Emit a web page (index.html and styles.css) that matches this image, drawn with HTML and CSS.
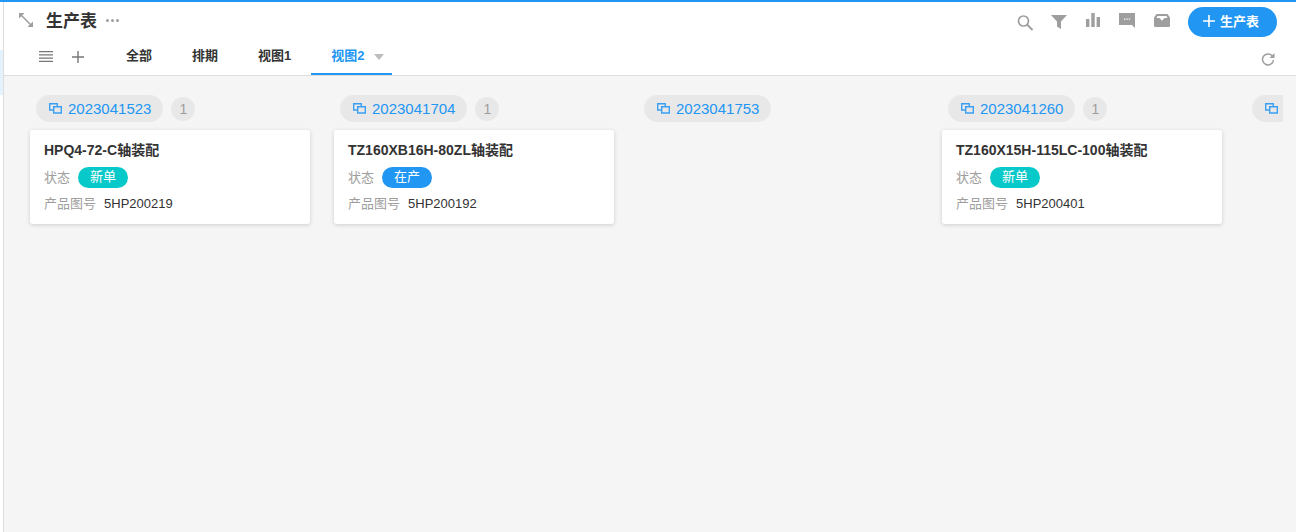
FILE: index.html
```html
<!DOCTYPE html>
<html lang="zh-CN">
<head>
    <meta charset="UTF-8">
    <title>生产表</title>
    <link rel="stylesheet" href="styles.css">
</head>
<body>
    <!-- Left rail -->
    <div class="rail"><div class="rail-active"></div></div>

    <div class="page">
        <!-- Header -->
        <div class="header">
            <div class="title-row">
                <svg class="expand-icon" width="14" height="14" viewBox="0 0 14 14"><path d="M1.500 1.500l11 11" stroke="#9e9e9e" stroke-width="1.500"/><path d="M0 0h5.500L0 5.500zM14 14H8.500L14 8.500z" fill="#9e9e9e"/></svg>
                <span class="page-title">生产表</span>
                <span class="more-dots"><i></i><i></i><i></i></span>
                <div class="tools">
                    <svg width="16" height="16" viewBox="0 0 16 16"><circle cx="6.500" cy="8" r="5" fill="none" stroke="#9e9e9e" stroke-width="1.700"/><path d="M10 11.500l5.500 5.500" stroke="#9e9e9e" stroke-width="2"/></svg>
                    <svg width="16" height="16" viewBox="0 0 16 16"><path d="M0 2h16l-6 6.500V16l-4-2.500v-5z" fill="#9e9e9e"/></svg>
                    <svg width="16" height="16" viewBox="0 0 16 16"><path d="M1 6h3.400v8H1zM6.300 0h3.400v14H6.300zM11.600 4H15v10h-3.400z" fill="#9e9e9e"/></svg>
                    <svg width="16" height="16" viewBox="0 0 16 16"><path d="M0 0h16v15l-3-3H0z" fill="#9e9e9e"/><path d="M5 5.500h1.300v1.300H5zM7.400 5.500h1.300v1.300H7.400zM9.800 5.500h1.300v1.300H9.800z" fill="#fff"/></svg>
                    <svg class="inbox-icon" width="16" height="16" viewBox="0 0 16 16"><path d="M2.500 1h11L16 4.500V12.500q0 1.500-1.500 1.500h-13Q0 14 0 12.500V4.500z" fill="#9e9e9e"/><path d="M2.500 5H5.500L8 7.800 10.500 5h3L12.500 3h-9z" fill="#fff"/></svg>
                </div>
                <button class="add-btn"><svg class="add-plus" width="12" height="12" viewBox="0 0 12 12"><path d="M5.200 0h1.600v5.200H12v1.600H6.800V12H5.200V6.800H0V5.200h5.200z" fill="#fff"/></svg>生产表</button>
            </div>
            <div class="tab-row">
                <svg class="menu-icon" width="14" height="11" viewBox="0 0 14 11"><path d="M0 0h14v1.300H0zM0 3.200h14v1.300H0zM0 6.500h14v1.300H0zM0 9.700h14V11H0z" fill="#777"/></svg>
                <svg class="plus-icon" width="12" height="12" viewBox="0 0 12 12"><path d="M5.300 0h1.400v5.300H12v1.400H6.700V12H5.300V6.700H0V5.300h5.300z" fill="#777"/></svg>
                <div class="tabs">
                    <a class="tab">全部</a>
                    <a class="tab">排期</a>
                    <a class="tab">视图1</a>
                    <a class="tab tab-active">视图2<span class="caret"></span></a>
                </div>
                <svg class="refresh-icon" width="14" height="14" viewBox="0 0 14 14"><path d="M11.700 4.500A5.500 5.500 0 1 0 12.500 8" fill="none" stroke="#9e9e9e" stroke-width="1.500"/><path d="M13.500 1v5h-5z" fill="#9e9e9e"/></svg>
            </div>
        </div>

        <!-- Board -->
        <div class="board">
            <div class="column">
                <div class="column-head">
                    <span class="group-pill"><svg class="link-icon" viewBox="0 0 13 11"><use href="#link"/></svg>2023041523</span>
                    <span class="count">1</span>
                </div>
                <div class="card">
                    <div class="card-title">HPQ4-72-C轴装配</div>
                    <div class="card-row"><span class="label">状态</span><span class="tag tag-new">新单</span></div>
                    <div class="card-row"><span class="label">产品图号</span><span class="value">5HP200219</span></div>
                </div>
            </div>
            <div class="column">
                <div class="column-head">
                    <span class="group-pill"><svg class="link-icon" viewBox="0 0 13 11"><use href="#link"/></svg>2023041704</span>
                    <span class="count">1</span>
                </div>
                <div class="card">
                    <div class="card-title">TZ160XB16H-80ZL轴装配</div>
                    <div class="card-row"><span class="label">状态</span><span class="tag tag-doing">在产</span></div>
                    <div class="card-row"><span class="label">产品图号</span><span class="value">5HP200192</span></div>
                </div>
            </div>
            <div class="column">
                <div class="column-head">
                    <span class="group-pill"><svg class="link-icon" viewBox="0 0 13 11"><use href="#link"/></svg>2023041753</span>
                </div>
            </div>
            <div class="column">
                <div class="column-head">
                    <span class="group-pill"><svg class="link-icon" viewBox="0 0 13 11"><use href="#link"/></svg>2023041260</span>
                    <span class="count">1</span>
                </div>
                <div class="card">
                    <div class="card-title">TZ160X15H-115LC-100轴装配</div>
                    <div class="card-row"><span class="label">状态</span><span class="tag tag-new">新单</span></div>
                    <div class="card-row"><span class="label">产品图号</span><span class="value">5HP200401</span></div>
                </div>
            </div>
            <!-- Next column is cut off by the board edge, only its icon shows -->
            <div class="column">
                <div class="column-head">
                    <span class="group-pill group-pill-cut"><svg class="link-icon" viewBox="0 0 13 11"><use href="#link"/></svg></span>
                </div>
            </div>
        </div>
    </div>

    <!-- Shared icon -->
    <svg class="icon-defs" width="0" height="0">
        <symbol id="link" viewBox="0 0 13 11">
            <path d="M4.500 7H.7V.7h7.600v3M4.700 3.700h7.600V10H4.700z" fill="none" stroke="#3a9ff5" stroke-width="1.400"/>
        </symbol>
    </svg>
</body>
</html>
```
FILE: styles.css
```css
html, body {
    height: 100%;
}

body {
    margin: 0;
    display: flex;
    height: 532px;
    overflow: hidden;
    font-family: "Liberation Sans", "Noto Sans CJK SC", sans-serif;
    background-color: #fff;
    border-top: 2px solid #2196f3;
    box-sizing: border-box;
}

/* Left rail */
.rail {
    width: 3px;
    flex-shrink: 0;
    padding-top: 48px;
    border-right: 1px solid #ddd;
}

.rail-active {
    height: 45px;
    background-color: #e3f2fd;
}

.page {
    flex: 1;
    min-width: 0;
    display: flex;
    flex-direction: column;
}

/* Header */
.header {
    height: 74px;
    flex-shrink: 0;
    box-sizing: border-box;
    border-bottom: 1px solid #ddd;
}

.title-row {
    height: 40px;
    display: flex;
    align-items: center;
    padding: 0 19px 0 15px;
}

.expand-icon {
    margin-top: -4px;
}

.page-title {
    margin-left: 13px;
    margin-top: -5px;
    font-size: 17px;
    font-weight: bold;
    color: #333;
}

.more-dots {
    display: flex;
    gap: 2px;
    margin-left: 9px;
    margin-top: -4px;
}

.more-dots i {
    width: 3px;
    height: 3px;
    border-radius: 50%;
    background-color: #9e9e9e;
}

.tools {
    margin-left: auto;
    display: flex;
    align-items: center;
    gap: 18px;
    margin-top: -2px;
}

.tools svg {
    overflow: visible;
}

.inbox-icon {
    margin-left: 1px;
}

.add-btn {
    display: flex;
    align-items: center;
    margin-left: 18px;
    width: 89px;
    height: 30px;
    border: none;
    border-radius: 15px;
    background-color: #2196f3;
    color: #fff;
    font-family: inherit;
    font-size: 13px;
    font-weight: bold;
    padding: 0 0 3px 15px;
}

.add-plus {
    margin-right: 5px;
}

.tab-row {
    height: 33px;
    display: flex;
    align-items: center;
    padding-left: 35px;
    padding-right: 21px;
}

.menu-icon,
.plus-icon {
    margin-top: -4px;
}

.plus-icon {
    margin-left: 19px;
}

.tabs {
    display: flex;
    height: 100%;
    margin-left: 22px;
}

.tab {
    padding: 0 20px;
    font-size: 13px;
    font-weight: bold;
    line-height: 28px;
    color: #333;
    box-sizing: border-box;
}

.tab-active {
    padding-right: 8px;
    color: #2196f3;
    border-bottom: 2px solid #2196f3;
}

.caret {
    display: inline-block;
    margin-left: 9px;
    vertical-align: 0;
    border-left: 5px solid transparent;
    border-right: 5px solid transparent;
    border-top: 6px solid #bdbdbd;
}

.refresh-icon {
    margin-left: auto;
}

/* Board */
.board {
    flex: 1;
    display: flex;
    overflow: hidden;
    margin-right: 13px;
    padding-left: 26px;
    background-color: #f5f5f5;
    box-shadow: 13px 0 0 #f5f5f5;
}

.column {
    width: 280px;
    flex-shrink: 0;
    margin-right: 24px;
}

.column-head {
    display: flex;
    align-items: center;
    gap: 8px;
    height: 27px;
    margin-top: 19px;
    padding-left: 6px;
}

.group-pill {
    display: flex;
    align-items: center;
    height: 27px;
    padding: 0 12px 0 13px;
    border-radius: 14px;
    background-color: #e8e8e8;
    color: #2196f3;
    font-size: 15px;
}

.group-pill-cut {
    width: 100px;
}

.link-icon {
    width: 13px;
    height: 11px;
    margin-right: 6px;
}

.count {
    width: 24px;
    height: 24px;
    border-radius: 50%;
    background-color: #e8e8e8;
    color: #9e9e9e;
    font-size: 14px;
    line-height: 24px;
    text-align: center;
}

.card {
    height: 94px;
    margin-top: 8px;
    padding: 11px 14px 0;
    box-sizing: border-box;
    border-radius: 3px;
    background-color: #fff;
    box-shadow: 0 1px 4px rgba(0, 0, 0, 0.16);
}

.card-title {
    font-size: 14px;
    font-weight: bold;
    line-height: 18px;
    color: #333;
}

.card-row {
    display: flex;
    align-items: center;
    height: 26px;
    font-size: 13px;
}

.card-title + .card-row {
    margin-top: 5px;
}

.label {
    color: #9e9e9e;
    margin-right: 8px;
    margin-top: -2px;
}

.value {
    color: #333;
}

.tag {
    width: 50px;
    height: 21px;
    border-radius: 11px;
    color: #fff;
    line-height: 20px;
    text-align: center;
}

.tag-new {
    background-color: #08c9c9;
}

.tag-doing {
    background-color: #2196f3;
}

.icon-defs {
    position: absolute;
}
```
